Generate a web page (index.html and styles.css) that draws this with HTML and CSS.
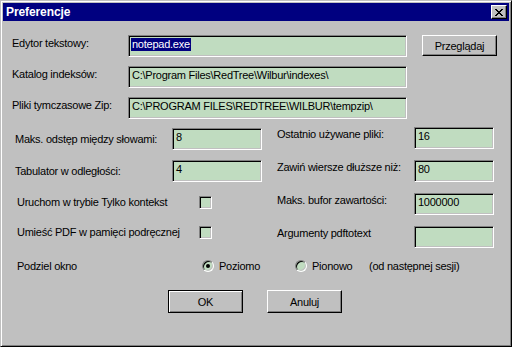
FILE: index.html
```html
<!DOCTYPE html>
<html lang="pl">
<head>
<meta charset="utf-8">
<title>Preferencje</title>
<link rel="stylesheet" href="styles.css">
</head>
<body>
<div class="window">
  <div class="titlebar">
    <span class="title">Preferencje</span>
    <div class="close">
      <svg width="8" height="7" viewBox="0 0 8 7" shape-rendering="crispEdges">
        <path d="M0 0h2v1h-2zM6 0h2v1h-2zM1 1h2v1h-2zM5 1h2v1h-2zM2 2h4v1h-4zM3 3h2v1h-2zM2 4h4v1h-4zM1 5h2v1h-2zM5 5h2v1h-2zM0 6h2v1h-2zM6 6h2v1h-2z" fill="#000"/>
      </svg>
    </div>
  </div>
  <div class="content">
    <div class="top">
      <div class="trow">
        <span class="tlabel">Edytor tekstowy:</span>
        <div class="field wide"><span class="sel">notepad.exe</span></div>
        <div class="btn browse">Przeglądaj</div>
      </div>
      <div class="trow">
        <span class="tlabel">Katalog indeksów:</span>
        <div class="field wide"><span class="val">C:\Program Files\RedTree\Wilbur\indexes\</span></div>
      </div>
      <div class="trow">
        <span class="tlabel">Pliki tymczasowe Zip:</span>
        <div class="field wide"><span class="val">C:\PROGRAM FILES\REDTREE\WILBUR\tempzip\</span></div>
      </div>
    </div>
    <div class="cols">
      <div class="col left">
        <div class="frow">
          <span class="flabel">Maks. odstęp między słowami:</span>
          <div class="field num-l"><span class="val">8</span></div>
        </div>
        <div class="frow">
          <span class="flabel">Tabulator w odległości:</span>
          <div class="field num-l"><span class="val">4</span></div>
        </div>
        <div class="crow">
          <span class="clabel">Uruchom w trybie Tylko kontekst</span>
          <span class="check"></span>
        </div>
        <div class="crow">
          <span class="clabel">Umieść PDF w pamięci podręcznej</span>
          <span class="check"></span>
        </div>
      </div>
      <div class="col right">
        <div class="frow">
          <span class="flabel">Ostatnio używane pliki:</span>
          <div class="field num-r"><span class="val">16</span></div>
        </div>
        <div class="frow">
          <span class="flabel">Zawiń wiersze dłuższe niż:</span>
          <div class="field num-r"><span class="val">80</span></div>
        </div>
        <div class="frow">
          <span class="flabel">Maks. bufor zawartości:</span>
          <div class="field num-r"><span class="val">1000000</span></div>
        </div>
        <div class="frow">
          <span class="flabel">Argumenty pdftotext</span>
          <div class="field num-r"></div>
        </div>
      </div>
    </div>
    <div class="radios">
      <span class="rlabel">Podziel okno</span>
      <span class="radio checked"></span>
      <span class="ropt1">Poziomo</span>
      <span class="radio"></span>
      <span class="ropt2">Pionowo</span>
      <span class="note">(od następnej sesji)</span>
    </div>
    <div class="buttons">
      <div class="btn pbtn default">OK</div>
      <div class="btn pbtn">Anuluj</div>
    </div>
  </div>
</div>
</body>
</html>
```
FILE: styles.css
```css
* { box-sizing: border-box; }

body {
  margin: 0;
  background: #c0c0c0;
  font-family: "Liberation Sans", Arial, sans-serif;
  font-size: 11px;
  letter-spacing: -0.25px;
  color: #000;
}

.window {
  width: 512px;
  height: 347px;
  background: #c0c0c0;
  border: 1px solid;
  border-color: #c0c0c0 #000 #000 #c0c0c0;
  box-shadow: inset 1px 1px #fff, inset -1px -1px #808080;
  padding: 2px;
  display: flex;
  flex-direction: column;
}

.titlebar {
  height: 18px;
  flex: none;
  background: #000080;
  display: flex;
  align-items: center;
  justify-content: space-between;
  padding: 0 2px 0 3px;
}

.title {
  color: #fff;
  font-weight: bold;
  font-size: 12px;
  letter-spacing: -0.1px;
}

.close {
  width: 16px;
  height: 14px;
  background: #c0c0c0;
  border: 1px solid;
  border-color: #fff #000 #000 #fff;
  box-shadow: inset -1px -1px #808080;
  display: flex;
  align-items: center;
  justify-content: center;
  padding-right: 1px;
}

.close svg { display: block; }

.content {
  flex: 1;
  padding-top: 14px;
}

.top {
  display: flex;
  flex-direction: column;
  gap: 9px;
  padding-left: 9px;
}

.trow {
  display: flex;
  height: 22px;
}

.tlabel {
  width: 116px;
  flex: none;
  padding-top: 2px;
  line-height: 13px;
}

.field {
  flex: none;
  height: 22px;
  background: #c0dcc0;
  border: 1px solid;
  border-color: #808080 #fff #fff #808080;
  box-shadow: inset 1px 1px #000, inset -1px -1px #c0c0c0;
  padding: 2px 0 0 2px;
  line-height: 13px;
  white-space: nowrap;
  overflow: hidden;
}

.wide { width: 279px; }

.sel {
  display: inline-block;
  background: #000080;
  color: #fff;
  padding: 0 1px;
  line-height: 13px;
}

.val { padding: 0 1px; }

.btn {
  flex: none;
  display: flex;
  align-items: center;
  justify-content: center;
  background: #c0c0c0;
  border: 1px solid;
  border-color: #fff #000 #000 #fff;
  box-shadow: inset -1px -1px #808080;
}

.browse {
  width: 75px;
  height: 21px;
  margin-left: 15px;
}

.cols {
  display: flex;
  margin-top: 8px;
  padding-left: 11px;
}

.col {
  display: flex;
  flex-direction: column;
}

.left {
  width: 248px;
  padding-top: 1px;
  gap: 10px;
}

.right {
  margin-left: 14px;
  gap: 11px;
}

.frow {
  display: flex;
  height: 22px;
  align-items: center;
}

.flabel {
  flex: none;
  padding-left: 1px;
  line-height: 13px;
}

.left .flabel { width: 158px; }

.right .frow { align-items: flex-start; }

.right .flabel {
  width: 138px;
  padding-top: 1px;
}

.num-l { width: 90px; }
.num-r { width: 80px; }

.crow {
  display: flex;
  height: 20px;
  align-items: center;
}

.clabel {
  width: 185px;
  flex: none;
  padding-left: 3px;
}

.check {
  width: 13px;
  height: 13px;
  flex: none;
  background: #c0dcc0;
  border: 1px solid;
  border-color: #808080 #fff #fff #808080;
  box-shadow: inset 1px 1px #000, inset -1px -1px #c0c0c0;
}

.radios {
  display: flex;
  align-items: center;
  height: 16px;
  margin: 10px 0 0 13px;
}

.rlabel {
  width: 186px;
  flex: none;
  padding-left: 1px;
}

.radio {
  position: relative;
  width: 12px;
  height: 12px;
  flex: none;
  margin-right: 5px;
  border-radius: 50%;
  background: #c0dcc0;
  border: 1px solid;
  border-color: #808080 #fff #fff #808080;
  box-shadow: inset 1px 1px #000, inset -1px -1px #c0c0c0;
}

.radio.checked::after {
  content: "";
  position: absolute;
  left: 3px;
  top: 3px;
  width: 4px;
  height: 4px;
  border-radius: 50%;
  background: #000;
}

.ropt1 { width: 76px; flex: none; }
.ropt2 { width: 57px; flex: none; }

.buttons {
  display: flex;
  gap: 24px;
  margin: 16px 0 0 165px;
}

.pbtn {
  width: 75px;
  height: 23px;
}

.default {
  border: 1px solid #000;
  box-shadow: inset 1px 1px #fff, inset -1px -1px #808080;
}
```
